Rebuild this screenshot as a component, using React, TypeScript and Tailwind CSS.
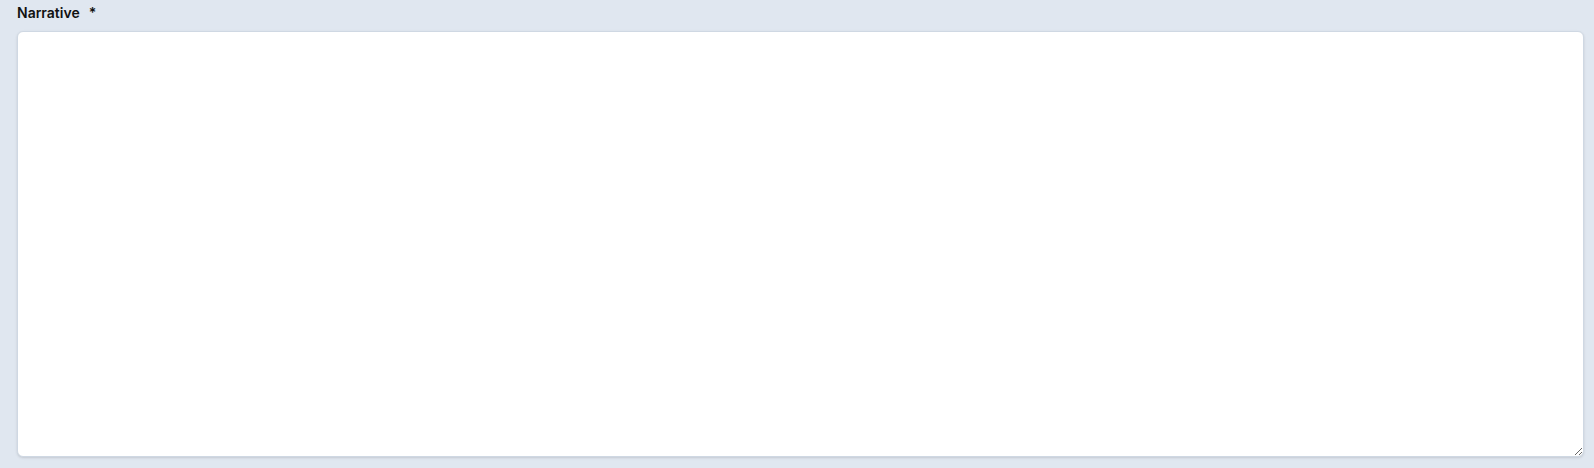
export default function App() {
  return (
    <div
      className="min-h-[468px] w-full bg-[#e0e7f0] pl-[17px] pr-[10px] pt-[3px]"
      style={{ fontFamily: "Inter, 'Liberation Sans', sans-serif" }}
    >
      <label className="flex h-5 items-center gap-[9px] text-sm leading-5 font-semibold text-[#111111]">
        Narrative <span>*</span>
      </label>
      <textarea className="mt-2 block h-[426px] w-full resize-y rounded-md border border-[#cfd8e3] bg-white p-3 text-sm shadow-sm outline-none" />
    </div>
  );
}
